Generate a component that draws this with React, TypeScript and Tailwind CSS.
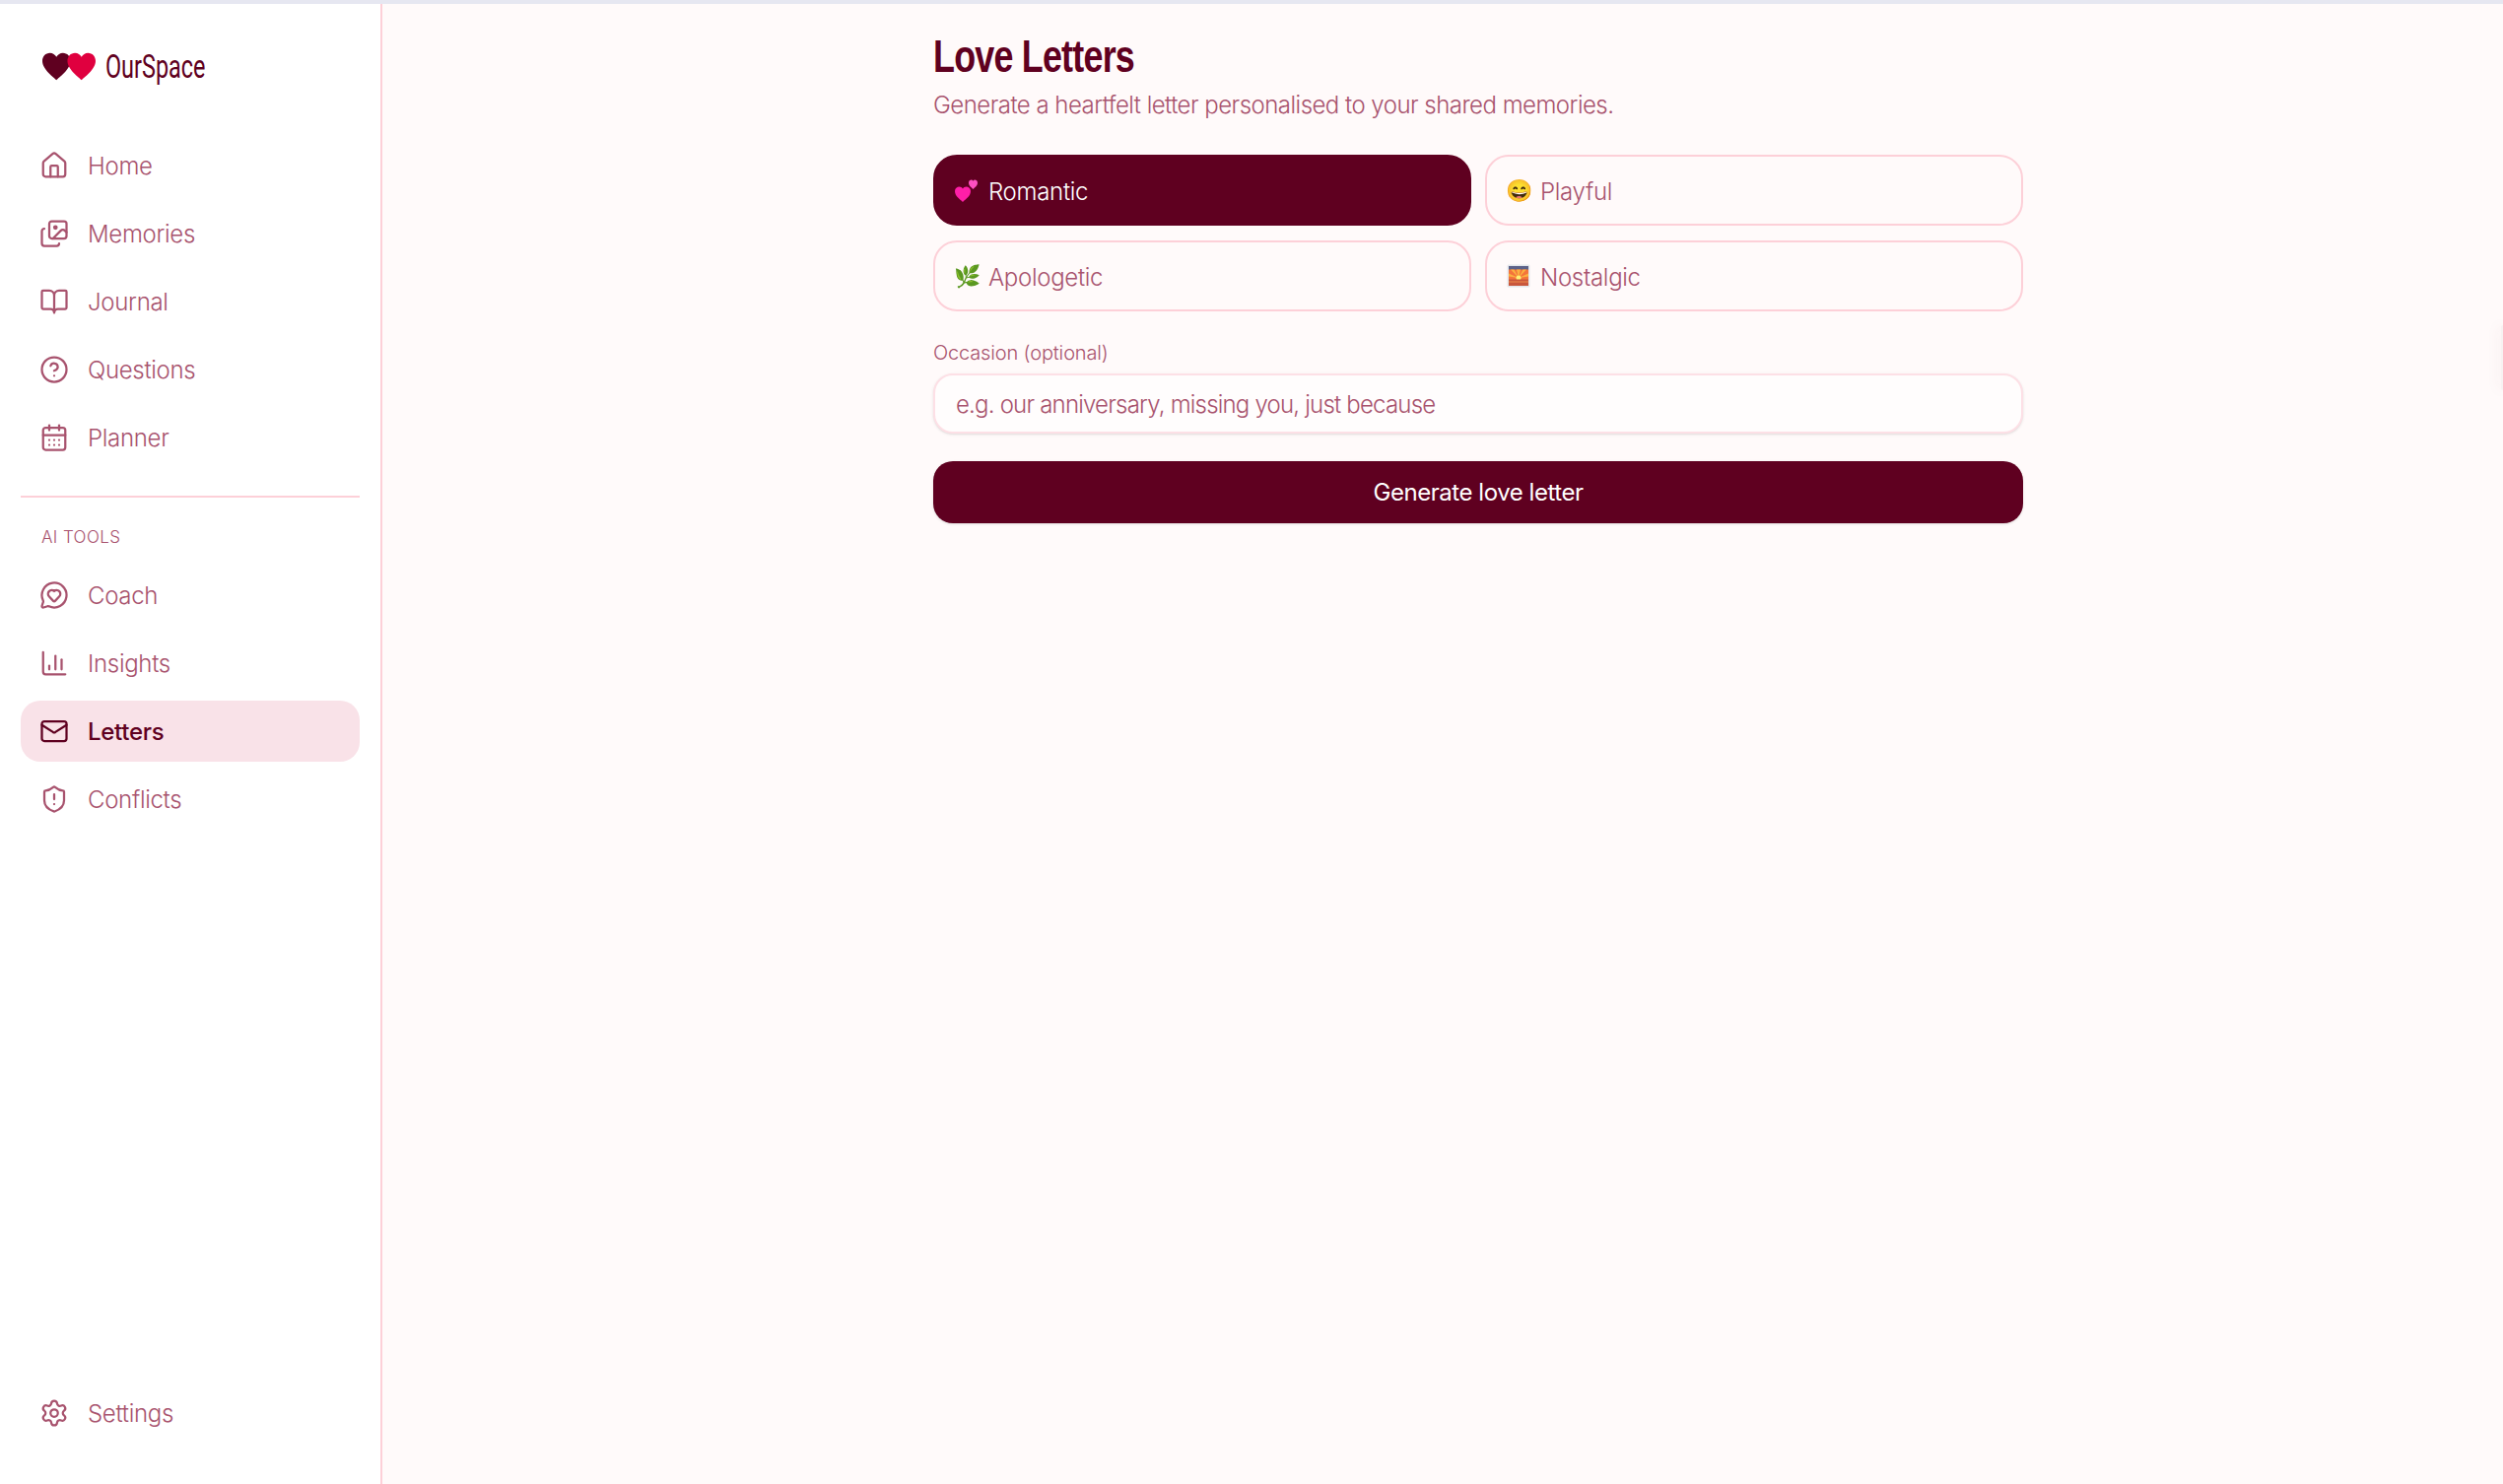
import React from "react";
import { House, Images, BookOpen, CircleHelp, CalendarDays, MessageCircleHeart, Mail, ShieldAlert, Settings } from "lucide-react";

const BarsIcon: React.FC<{ className?: string; strokeWidth?: number }> = ({ className, strokeWidth = 1.8 }) => (
  <svg viewBox="0 0 24 24" fill="none" stroke="currentColor" strokeWidth={strokeWidth} strokeLinecap="round" strokeLinejoin="round" className={className}>
    <path d="M3 3v16a2 2 0 0 0 2 2h16" />
    <path d="M8 17v-3" />
    <path d="M13 17V6" />
    <path d="M18 17V9" />
  </svg>
);

const mainItems = [
  { label: "Home", icon: House },
  { label: "Memories", icon: Images },
  { label: "Journal", icon: BookOpen },
  { label: "Questions", icon: CircleHelp },
  { label: "Planner", icon: CalendarDays },
];

const aiItems = [
  { label: "Coach", icon: MessageCircleHeart },
  { label: "Insights", icon: BarsIcon },
  { label: "Letters", icon: Mail, active: true },
  { label: "Conflicts", icon: ShieldAlert },
];

const HeartsEmoji = () => (
  <svg viewBox="0 0 24 24" className="size-[24px]">
    <path d="M8 24 C5 21 0 18 0 13 C0 10.200 2.200 8.500 4.500 8.500 C6 8.500 7.400 9.400 8 10.600 C8.600 9.400 10 8.500 11.500 8.500 C13.800 8.500 16 10.200 16 13 C16 18 11 21 8 24 Z" fill="#ff1fa8" />
    <path d="M18.500 11 C16.500 9 14 7.500 14 4.500 C14 2.800 15.300 1.500 16.700 1.500 C17.600 1.500 18.200 2.100 18.500 2.800 C18.800 2.100 19.400 1.500 20.300 1.500 C21.700 1.500 23 2.800 23 4.500 C23 7.500 20.500 9 18.500 11 Z" fill="#ff4fc0" />
  </svg>
);

const SunsetEmoji = () => (
  <svg viewBox="0 0 24 24" className="size-[24px]">
    <rect x="0.500" y="0.500" width="23" height="23" rx="1.500" fill="#e3e6ea" />
    <rect x="2" y="2" width="20" height="20" fill="#f4743b" />
    <rect x="2" y="2" width="20" height="3.500" fill="#5d6288" />
    <path d="M12 14 L4 5.500 H7.500 Z M12 14 L10 5.500 H14 Z M12 14 L16.500 5.500 H20 Z M12 14 L2 9.500 V12.500 Z M12 14 L22 9.500 V12.500 Z" fill="#fbb040" />
    <circle cx="12" cy="14" r="2.500" fill="#fff176" />
    <rect x="2" y="15.500" width="20" height="6.500" fill="#c9563c" />
    <rect x="2" y="17.500" width="20" height="1" fill="#f08a4b" />
  </svg>
);

const tones = [
  { emoji: <HeartsEmoji />, label: "Romantic", active: true },
  { emoji: <span>😄</span>, label: "Playful" },
  { emoji: <span>🌿</span>, label: "Apologetic" },
  { emoji: <SunsetEmoji />, label: "Nostalgic" },
];

type NavItemProps = { label: string; icon: React.ElementType; active?: boolean };

const NavItem: React.FC<NavItemProps> = ({ label, icon: Icon, active }) => (
  <div className={`flex h-[62px] items-center gap-[19px] rounded-[20px] pl-[19px] text-[24px] ${active ? "bg-[#f9e2e8] font-medium tracking-[-0.3px] text-[#5f0020]" : "font-light tracking-[-0.3px] text-[#a8536e]"}`}>
    <Icon className="size-[30px]" strokeWidth={1.8} />
    <span className="pt-[2px]">{label}</span>
  </div>
);

const Hearts = () => (
  <svg viewBox="0 0 54 27" className="h-[29px] w-[55px]">
    <path d="M14 27 C12 24.500 0 16.500 0 8 C0 3.500 3.300 0 7.500 0 C10.300 0 12.800 1.700 14 4 C15.200 1.700 17.700 0 20.500 0 C24.700 0 28 3.500 28 8 C28 16.500 16 24.500 14 27 Z" fill="#5f0020" />
    <path d="M39 27 C37 24.500 25 16.500 25 8 C25 3.500 28.300 0 32.500 0 C35.300 0 37.800 1.700 39 4 C40.200 1.700 42.700 0 45.500 0 C49.700 0 53 3.500 53 8 C53 16.500 41 24.500 39 27 Z" fill="#e0003f" />
  </svg>
);

export default function App() {
  return (
    <div className="flex h-[1506px] flex-col bg-[#fffafa] font-['Inter','Liberation_Sans',sans-serif]">
      <div className="h-[4px] shrink-0 bg-[#e6e7f1]" />
      <div className="flex min-h-0 flex-1">
        <aside className="flex w-[388px] shrink-0 flex-col border-r-2 border-[#fdd0d8] bg-white px-[21px] pb-[41px]">
          <div className="flex h-[133px] items-center gap-[9px] pb-[6px] pl-[22px]">
            <Hearts />
            <span className="inline-block origin-left scale-x-[0.71] font-['Roboto',sans-serif] text-[33px] font-normal text-[#5f0020]">OurSpace</span>
          </div>
          <nav className="flex flex-col gap-[7px]">
            {mainItems.map((item) => (
              <NavItem key={item.label} {...item} />
            ))}
          </nav>
          <div className="mt-[28px] h-[2px] bg-[#fdd0d8]" />
          <div className="mt-[30px] mb-[18px] pl-[21px] text-[17px] leading-[20px] font-light tracking-[0.4px] text-[#a8536e]">AI TOOLS</div>
          <nav className="flex flex-col gap-[7px]">
            {aiItems.map((item) => (
              <NavItem key={item.label} {...item} />
            ))}
          </nav>
          <div className="mt-auto">
            <NavItem label="Settings" icon={Settings} />
          </div>
        </aside>
        <main className="relative flex-1 pl-[559px]">
          <div className="w-[1106px]">
            <h1 className="mt-[27px] origin-left scale-x-[0.78] font-['Liberation_Sans',sans-serif] text-[46px] leading-[52px] font-bold tracking-[-1px] text-[#5f0020]">Love Letters</h1>
            <p className="mt-[7px] pt-[1px] text-[24px] leading-[32px] font-light tracking-[-0.53px] text-[#a8536e]">Generate a heartfelt letter personalised to your shared memories.</p>
            <div className="mt-[34px] grid grid-cols-2 gap-x-[14px] gap-y-[15px]">
              {tones.map((tone) => (
                <button key={tone.label} className={`flex h-[72px] items-center gap-[10px] rounded-[24px] border-2 pl-[20px] text-[24px] font-light tracking-[-0.3px] ${tone.active ? "border-[#5f0020] bg-[#5f0020] text-white" : "border-[#fdd0d8] text-[#a8536e]"}`}>
                  <span className="flex w-[24px] justify-center text-[22px]">{tone.emoji}</span>
                  <span className="pt-[3px]">{tone.label}</span>
                </button>
              ))}
            </div>
            <label className="mt-[28px] block text-[20px] leading-[28px] font-light tracking-[-0.15px] text-[#a8536e]">Occasion (optional)</label>
            <input readOnly placeholder="e.g. our anniversary, missing you, just because" className="mt-[7px] h-[61px] w-full rounded-[20px] border-2 border-[#fde0e6] bg-[#fffdfd] px-[21px] pt-[1px] text-[24px] font-light tracking-[-0.8px] shadow-sm outline-none placeholder:text-[#a8536e]" />
            <button className="mt-[28px] h-[63px] w-full rounded-[20px] bg-[#5f0020] pt-[1px] text-[24px] font-normal tracking-[-0.45px] text-white shadow-sm">Generate love letter</button>
          </div>
          <div className="absolute top-[326px] right-0 h-[66px] w-[2px] rounded-l-[2px] bg-[#f7f2f2] shadow-[0_0_14px_rgba(120,60,60,0.18)]" />
        </main>
      </div>
    </div>
  );
}
